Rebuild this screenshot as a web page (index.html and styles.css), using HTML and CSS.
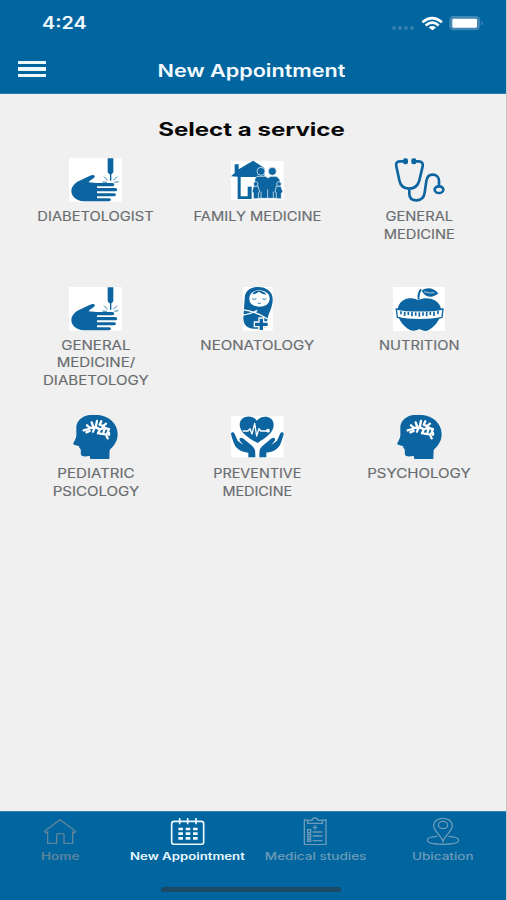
FILE: index.html
```html
<!DOCTYPE html>
<html lang="en">
<head>
<meta charset="utf-8">
<title>New Appointment</title>
<link rel="stylesheet" href="styles.css">
</head>
<body>
<svg class="defs" aria-hidden="true">
  <symbol id="hand" viewBox="120 24 159 132">
    <path fill="#fff" d="M120 24h158v131H120z"/>
    <path d="M127 122c0-10 7-20 18-27l38-18c9-4 17-2 14 4-2 5-15 9-18 16l24 2h47c8 0 8 9 0 10h-46v5h54c9 0 9 10 0 10h-54v6h51c8 0 8 9 0 9h-51v6h37c7 0 6 9-1 9h-76c-22-2-37-14-37-32z"/>
    <path d="M236 25h17v42l-5 6h-7l-5-6zM243 72h4v20h-4z"/>
    <path class="ray" d="M220 96l14 1M225 80l11 11M264 80l-11 11M269 95l-13 2"/>
  </symbol>
  <symbol id="family" viewBox="126 24 159 132">
    <path fill="#fff" d="M126 33h158v117H126z"/>
    <path d="M126 79l11-10V43h12v15l43-26 34 22v27h-71v58h22v8h-31V80z"/>
    <path d="M176 110h12v37h-12z"/>
    <g class="person">
      <path d="M204 79h26l7 5 8-5h18l9 9 6 32-8 25h-67l-9-31 4-28z"/>
      <circle cx="216" cy="64" r="12"/><circle cx="250" cy="64" r="12"/>
      <path d="M194 108h13l5 18-4 2v18h-15v-18l-4-2zM262 108h13l7 18-5 3v17h-15v-18l-4-2z"/>
      <circle cx="200" cy="102" r="7"/><circle cx="270" cy="102" r="7"/>
    </g>
    <path fill="none" stroke="#fff" stroke-width="2" d="M216 125v20M236 118v28M253 125v20"/>
  </symbol>
  <symbol id="stethoscope" viewBox="114 24 159 132">
    <path class="tube" d="M148 34h-13c-10 0-13 7-11 15l9 42c3 16 12 25 29 25s27-9 31-25l10-42c2-9-3-15-12-15h-13M163 117v14c0 14 9 20 22 20 15 0 22-9 24-23l5-35c2-13 8-19 19-19s19 8 19 19v14"/>
    <rect x="144" y="25" width="15" height="18" rx="6"/><rect x="169" y="25" width="15" height="18" rx="6"/>
    <ellipse class="tube" cx="252" cy="119" rx="13" ry="10"/>
  </symbol>
  <symbol id="baby" viewBox="126 20 159 132">
    <path fill="#fff" d="M162 20h89v131h-89z"/>
    <path d="M167 55c0-22 16-35 40-35 26 0 45 15 44 38 0 15-6 31-12 44l-9 38-10 5h-26c-20-1-31-12-31-32z"/>
    <path fill="#fff" d="M181 55c0-16 12-25 29-25s32 9 32 25c0 15-14 24-31 24s-30-9-30-24z"/>
    <path d="M190 42c8-1 14-3 20-8 6 5 13 7 22 9-5-9-13-12-22-12s-16 3-20 11z"/>
    <path class="face" d="M190 55q6 5 12 0M220 55q6 5 12 0M206 68q5 3 10 0"/>
    <path class="wrap" d="M160 88c28 3 50 11 76 28M161 104c18-1 31-7 44-14"/>
    <path class="cross" d="M210 113h14v12h14v14h-14v12h-14v-12h-14v-14h14z"/>
  </symbol>
  <symbol id="apple" viewBox="114 20 159 132">
    <path fill="#fff" d="M114 20h156v132H114z"/>
    <path d="M190 59c14-7 35-8 49 1 14 8 22 23 19 39-4 23-22 43-38 51-9 4-19 0-27-4-8 5-20 7-28 3-18-9-34-28-37-50-3-22 10-42 34-45 12-2 19 2 28 5z"/>
    <path class="stem" d="M191 57c-2-14 1-22 7-30"/>
    <path d="M200 31c17-12 35-8 50 8-16 15-38 15-50-8z"/>
    <path fill="none" stroke="#fff" stroke-width="2" d="M207 34q17 6 31 3"/>
    <path class="tape" d="M124 86c32 7 106 8 140 0l-3 25c-36 9-99 9-134 0z"/>
    <path class="ticks" d="M138 93v9M149 94v13M160 95v9M171 95v13M182 96v10M193 96v13M204 96v10M215 95v13M226 95v9M237 94v13M249 92v9"/>
  </symbol>
  <symbol id="head" viewBox="120 30 159 132">
    <path d="M142 64c4-23 24-35 53-35 37 0 71 21 71 58 0 22-11 35-24 48l-1 27h-57l-2-10c-9 2-21 4-25-1-4-6 1-14-3-19-2-3-5-4-3-8l-16-5c-4-2-2-5 0-8 6-11 8-17 7-28z"/>
    <path class="brain" d="M164 76l14-4 9-4M174 61l9 8 14-1M188 52l5 14M204 48l-4 19M217 49l-5 10 9 4M231 56l-10 8M201 67l12 6 14-5 12 5M197 68l-5 12M182 78l-10 4M213 73l-6 12M227 70l-3 11M240 72l-5 13M213 86l18 2 5 12M240 84v5"/>
  </symbol>
  <symbol id="heart" viewBox="126 30 159 132">
    <path fill="#fff" d="M126 33h158v124H126z"/>
    <path d="M204 47c12-18 51-16 50 14 0 23-26 38-48 53-27-14-53-31-54-54 0-30 39-32 52-13z"/>
    <path fill="none" stroke="#fff" stroke-width="4" stroke-linejoin="round" d="M161 78h16l6-7 6 16 8-32 6 38 7-22 5 7h20"/>
    <circle cx="237" cy="77" r="5.500" fill="#fff"/>
    <path id="palm" d="M199 157h-21v-14c-22-2-35-11-42-25-4-10-8-22-10-31 1-8 9-6 11 0l9 20 17 13c-4-6-16-15-10-20 4-4 10 0 15 5 12 11 27 18 30 31 1 7 1 14 1 21z"/>
    <use href="#palm" transform="translate(410 0) scale(-1 1)"/>
  </symbol>
</svg>
<div class="app">
  <header class="header">
    <div class="status">
      <span class="time">4:24</span>
      <span class="signal"><i></i><i></i><i></i><i></i></span>
      <svg class="wifi" viewBox="500 45 70 46"><g fill="none" stroke="#fff" stroke-width="8"><path d="M504 64q30-25 60 0M514 74q20-17 40 0"/></g><path fill="#fff" d="M523 80q11-8 23 0l-11 9z"/></svg>
      <svg class="battery" viewBox="586 45 102 48"><rect x="587" y="48" width="92" height="43" rx="13" fill="#4388b4"/><path fill="#4388b4" d="M682 64q5 1 5 6t-5 6z"/><rect x="596" y="56" width="74" height="27" rx="4" fill="#fff"/></svg>
    </div>
    <div class="titlebar">
      <div class="menu"><i></i><i></i><i></i></div>
      <h1 class="title">New Appointment</h1>
    </div>
  </header>
  <main class="content">
    <h2 class="heading">Select a service</h2>
    <div class="services">
      <div class="service"><svg><use href="#hand"/></svg><p>DIABETOLOGIST</p></div>
      <div class="service"><svg><use href="#family"/></svg><p>FAMILY MEDICINE</p></div>
      <div class="service"><svg><use href="#stethoscope"/></svg><p>GENERAL<br>MEDICINE</p></div>
      <div class="service"><svg><use href="#hand"/></svg><p class="wide">GENERAL<br>MEDICINE/<br>DIABETOLOGY</p></div>
      <div class="service"><svg><use href="#baby"/></svg><p class="wide">NEONATOLOGY</p></div>
      <div class="service"><svg><use href="#apple"/></svg><p>NUTRITION</p></div>
      <div class="service"><svg><use href="#head"/></svg><p class="wide">PEDIATRIC<br>PSICOLOGY</p></div>
      <div class="service"><svg><use href="#heart"/></svg><p class="snug">PREVENTIVE<br>MEDICINE</p></div>
      <div class="service"><svg><use href="#head"/></svg><p class="wide">PSYCHOLOGY</p></div>
    </div>
  </main>
  <nav class="tabbar">
    <div class="tabs">
      <div class="tab home"><svg viewBox="126 51 108 84"><path d="M134 94l46-35 47 35-4 5-5-3v34h-26v-25q0-4-4-4h-14q-4 0-4 4v25h-27V96l-5 3z"/></svg><span>Home</span></div>
      <div class="tab active"><svg viewBox="510 51 108 84"><g stroke-width="5"><rect x="515" y="64" width="96" height="69" rx="7"/><path d="M539 54v19M563 54v19M588 54v19"/></g><path stroke-width="8" stroke-dasharray="14 8" d="M535 87h58M535 101h58M535 115h58"/></svg><span>New Appointment</span></div>
      <div class="tab"><svg viewBox="130 51 108 84"><path d="M161 60h-9v74h65V60h-10M162 70V61h13q1-7 9-7t9 7h13v9zM184 76v13M177 82h14M162 89h9v9h-9zM162 103h9v8h-9zM162 117h9v7h-9zM177 96h29M177 108h29M177 122h29"/></svg><span>Medical studies</span></div>
      <div class="tab"><svg viewBox="513 51 108 84"><path d="M567 124c-5-17-28-31-28-47 0-13 12-22 28-22s28 9 28 22c0 16-23 30-28 47z"/><ellipse cx="567" cy="75" rx="14" ry="11"/><path d="M550 109c-19 1-30 5-30 12 0 8 21 12 47 12s47-4 47-12c0-7-12-11-31-12"/></svg><span>Ubication</span></div>
    </div>
    <div class="home-indicator"></div>
  </nav>
</div>
</body>
</html>
```
FILE: styles.css
```css
* { box-sizing: border-box; }
body { margin: 0; font-family: Inter, "Liberation Sans", sans-serif; }
h1, h2, p { margin: 0; }
.defs { display: block; width: 0; height: 0; position: absolute; }
.app {
  width: 507px; height: 900px; display: flex; flex-direction: column;
  background: #f0f0f0; overflow: hidden; border-right: 1px solid #c3c6c9;
}

.header { height: 94px; background: #01669f; color: #f4fbff; margin-right: -1px; border-bottom: 1px solid #2c7eac; }
.status { height: 46px; display: flex; align-items: center; padding: 0 24px 0 42px; }
.time { font-size: 17px; font-weight: 600; width: 70px; transform: scaleX(1.16); transform-origin: left; }
.signal { display: flex; gap: 2px; margin: 9px 7px 0 auto; }
.signal i { width: 4px; height: 4px; border-radius: 50%; background: #357fae; }
.wifi { width: 23px; height: 15px; margin-right: 5px; }
.battery { width: 34px; height: 16px; }
.titlebar { height: 47px; display: grid; grid-template-columns: 60px 1fr 60px; align-items: center; padding: 2px 4px 0 0; }
.menu { padding-left: 18px; margin-top: -3px; display: flex; flex-direction: column; gap: 3px; }
.menu i { width: 28px; height: 3.5px; background: #effaff; }
.title { font-size: 17.5px; font-weight: 600; line-height: 24px; text-align: center; white-space: nowrap; transform: scaleX(1.235); }

.content { flex: 1; padding: 22px 6px 0 15px; }
.heading { height: 26px; line-height: 26px; font-size: 18.5px; font-weight: 700; text-align: center; margin: 0 9px 0 -3px; color: #080808; transform: scaleX(1.3); }
.services { display: grid; grid-template-columns: repeat(3, 1fr); grid-auto-rows: 128.5px; padding-top: 16px; }
.service { display: flex; flex-direction: column; align-items: center; text-align: center; color: #696c6f; }
.service svg { width: 53px; height: 44px; fill: #0c65a0; flex: none; }
.service p { margin-top: 6px; font-size: 12.5px; line-height: 17.8px; white-space: nowrap; transform: scaleX(1.175); -webkit-text-stroke: 0.15px #696c6f; }
.service p.wide { transform: scaleX(1.205); }
.service p.snug { transform: scaleX(1.15); }

.ray, .face { fill: none; stroke: #0c65a0; stroke-width: 2.5; }
.person > * { stroke: #fff; stroke-width: 2; }
.tube { fill: none; stroke: #0c65a0; stroke-width: 8; stroke-linecap: round; }
.wrap { fill: none; stroke: #fff; stroke-width: 4; }
.cross { stroke: #fff; stroke-width: 4; }
.stem { fill: none; stroke: #0c65a0; stroke-width: 6; }
.tape { fill: #fff; stroke: #0c65a0; stroke-width: 4; }
.ticks { stroke: #0c65a0; stroke-width: 5; }
.brain { fill: none; stroke: #fff; stroke-width: 7; stroke-linecap: round; stroke-linejoin: round; }

.tabbar { height: 89px; background: #01669f; margin-right: -1px; border-top: 1px solid #3b83ac; }
.tabs { display: grid; grid-template-columns: repeat(4, 1fr); margin-left: -4px; padding-top: 5px; height: 74px; }
.tab { display: flex; flex-direction: column; align-items: center; color: #6d9bb7; }
.tab svg { width: 36px; height: 28px; fill: none; stroke: currentColor; stroke-width: 4; }
.tab span { font-size: 10px; line-height: 14px; margin-top: 4px; font-weight: 500; white-space: nowrap; transform: scaleX(1.35); }
.tab.home { color: #5d859e; }
.tab.home span { font-weight: 600; }
.tab.active { color: #eaf8ff; }
.tab.active span { font-weight: 600; transform: scaleX(1.32); }
.home-indicator { width: 180px; height: 5px; border-radius: 3px; background: #1c4a66; margin: 1px auto 0 161px; }
```
